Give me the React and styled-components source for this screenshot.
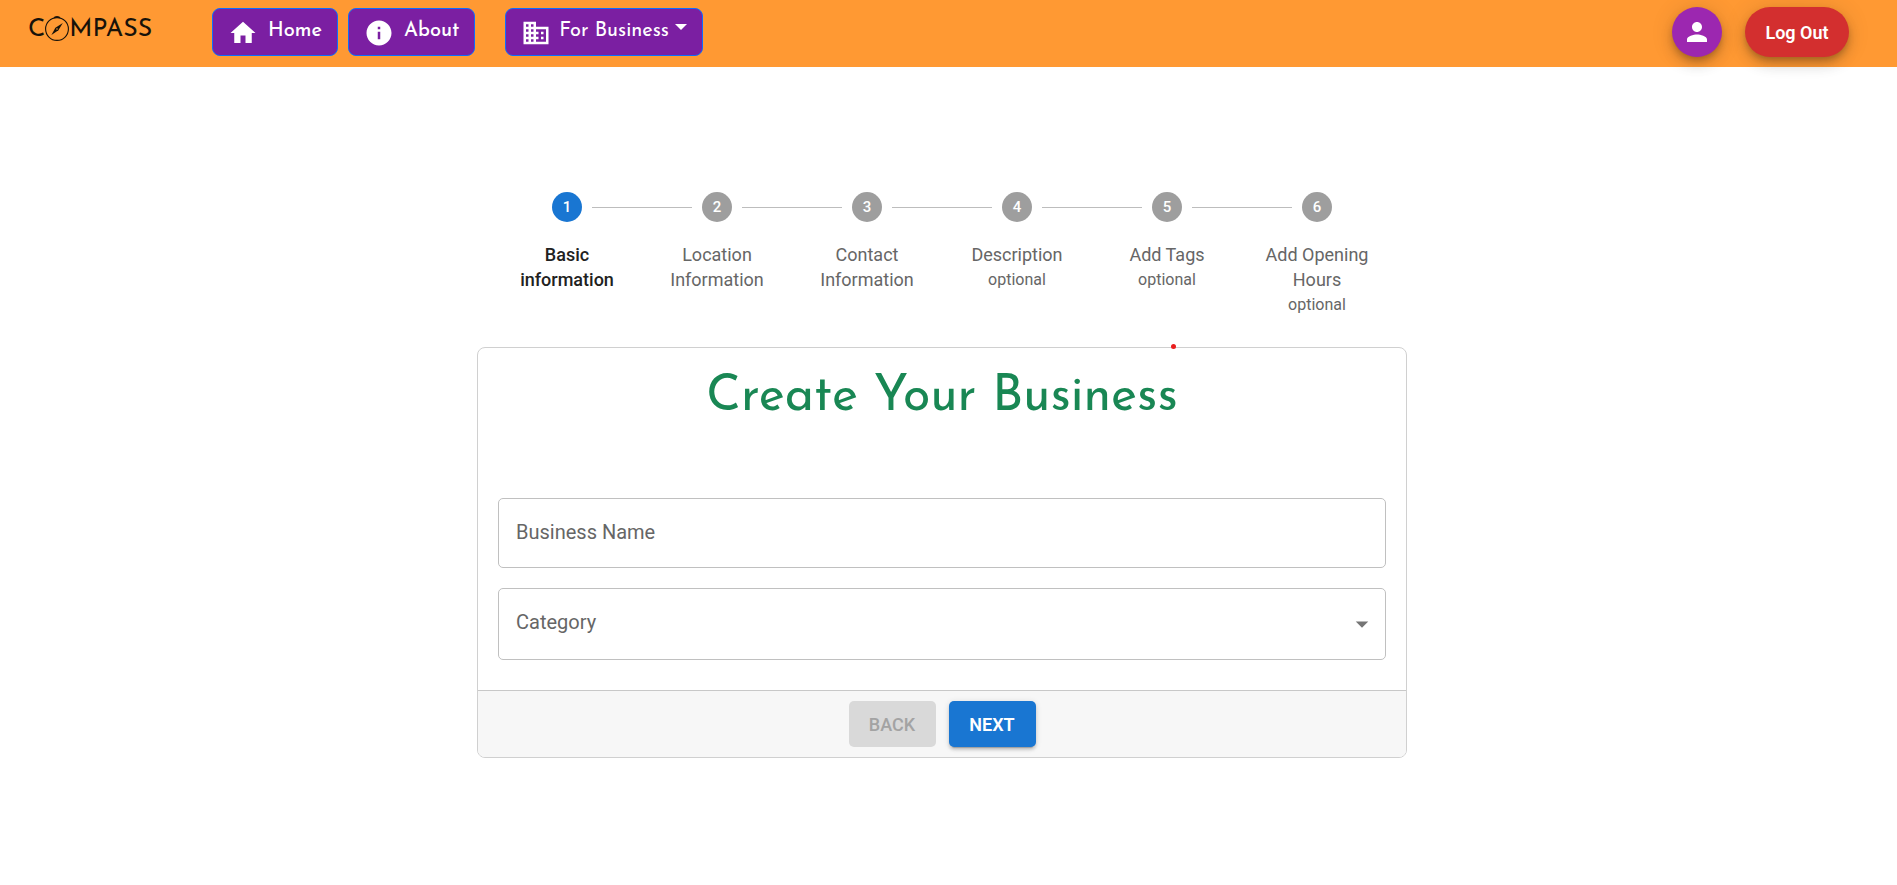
import React, { useState } from "react";
import styled, { createGlobalStyle, css } from "styled-components";
import { MdArrowDropDown, MdDomain, MdHome, MdInfo, MdPerson } from "react-icons/md";

const display = `"Josefin Sans", Lato, sans-serif`;

const GlobalStyle = createGlobalStyle`
  *, *::before, *::after { box-sizing: border-box; }
  body {
    margin: 0;
    background: #fff;
    color: #212121;
    font-family: Roboto, "Liberation Sans", sans-serif;
  }
  button, input, select { font-family: inherit; }
`;

const Header = styled.header`
  display: flex;
  align-items: flex-start;
  justify-content: space-between;
  height: 67px;
  padding: 7px 48px 0 28px;
  background: #ff9933;
`;

const Nav = styled.nav`
  display: flex;
  align-items: flex-start;
  padding-top: 1px;
`;

const Brand = styled.a`
  display: flex;
  align-items: center;
  width: 184px;
  color: #17120a;
  font: 400 25px/44px ${display};
  text-decoration: none;
`;

const NavButton = styled.button`
  display: flex;
  align-items: center;
  gap: ${(p) => (p.$menu ? 8 : 10)}px;
  height: 48px;
  margin-left: ${(p) => (p.$menu ? 30 : 0)}px;
  margin-right: ${(p) => (p.$spaced ? 10 : 0)}px;
  padding: 2px 15px 0;
  border: 1px solid #0d6efd;
  border-radius: 8px;
  background: #7b1fa2;
  color: #fff;
  font-weight: ${(p) => (p.$menu ? 400 : 500)};
  cursor: pointer;

  svg { flex: none; }
`;

const NavText = styled.span`
  padding-bottom: 4px;
  font-family: ${display};
  font-size: 20px;
  line-height: 24px;
`;

const Caret = styled.span`
  margin: 0 0 12px -2px;
  border: 6px solid transparent;
  border-top-color: #fff;
  border-bottom: 0;
`;

const Account = styled.div`
  display: flex;
  gap: 23px;
`;

const raised = css`
  box-shadow:
    0 4px 6px -1px rgba(0, 0, 0, 0.2),
    0 8px 13px 0 rgba(0, 0, 0, 0.14),
    0 1px 23px 0 rgba(0, 0, 0, 0.12);
`;

const Fab = styled.button`
  display: flex;
  align-items: center;
  justify-content: center;
  min-width: ${(p) => (p.$extended ? 104 : 50)}px;
  height: 50px;
  padding: 0;
  border: 0;
  border-radius: 25px;
  background: ${(p) => (p.$extended ? "#d32f2f" : "#9c27b0")};
  color: #fff;
  font-size: 18px;
  font-weight: 600;
  cursor: pointer;
  ${raised}
`;

const Main = styled.main`
  display: flex;
  flex-direction: column;
  align-items: center;
  gap: 30px;
  padding: 125px 13px 80px 0;
`;

const Stepper = styled.ol`
  display: flex;
  width: 100%;
  max-width: 900px;
  margin: 0;
  padding: 0;
  list-style: none;
`;

const Step = styled.li`
  flex: 1;
  text-align: center;
`;

const StepTrack = styled.div`
  display: flex;
  align-items: center;
  gap: 10px;
  margin-bottom: 20px;
`;

const Connector = styled.span`
  flex: 1;
  height: 0;
  border-top: 1px solid ${(p) => (p.$hidden ? "transparent" : "#bdbdbd")};
`;

const StepNumber = styled.span`
  width: 30px;
  height: 30px;
  border-radius: 50%;
  background: ${(p) => (p.$active ? "#1976d2" : "#9e9e9e")};
  color: #fff;
  font-size: 15px;
  font-weight: 500;
  line-height: 30px;
`;

const StepLabel = styled.div`
  padding: 0 20px;
  color: ${(p) => (p.$active ? "#212121" : "#666")};
  font-size: 18px;
  font-weight: ${(p) => (p.$active ? 500 : 400)};
  line-height: 25px;
`;

const Optional = styled.div`
  color: #666;
  font-size: 16px;
  line-height: 25px;
`;

const Card = styled.form`
  position: relative;
  width: 100%;
  max-width: 930px;
  border: 1px solid #d0d0d0;
  border-radius: 8px;
`;

const Marker = styled.span`
  position: absolute;
  top: -4px;
  left: calc(50% + 229px);
  width: 5px;
  height: 5px;
  border-radius: 50%;
  background: #e91e1e;
`;

const CardBody = styled.div`
  display: flex;
  flex-direction: column;
  gap: 20px;
  padding: 20px 20px 30px;
`;

const Title = styled.h1`
  margin: 0 0 50px;
  color: #198754;
  font: 400 50px/60px ${display};
  text-align: center;
`;

const Field = styled.div`
  position: relative;
  color: #757575;

  svg {
    position: absolute;
    top: 21px;
    right: 9px;
    pointer-events: none;
  }
`;

const FieldLabel = styled.label`
  position: absolute;
  top: 20px;
  left: 18px;
  color: #666;
  font-size: 20px;
  line-height: 28px;
  pointer-events: none;
`;

const control = css`
  display: block;
  width: 100%;
  padding: 0 18px;
  border: 1px solid #c0c0c0;
  border-radius: 5px;
  background: transparent;
  color: #212121;
  font-size: 20px;
`;

const TextInput = styled.input`
  ${control}
  height: 70px;
`;

const Select = styled.select`
  ${control}
  height: 72px;
  appearance: none;
`;

const CardFooter = styled.div`
  display: flex;
  justify-content: center;
  gap: 13px;
  padding: 10px;
  border-top: 1px solid #c8c8c8;
  border-radius: 0 0 7px 7px;
  background: #f7f7f7;
`;

const ActionButton = styled.button`
  min-width: 87px;
  height: 46px;
  padding: 0 16px;
  border: 0;
  border-radius: 5px;
  background: #1976d2;
  color: #fff;
  font-size: 18px;
  font-weight: 600;
  text-transform: uppercase;
  cursor: pointer;
  box-shadow:
    0 4px 1px -3px rgba(0, 0, 0, 0.2),
    0 3px 3px 0 rgba(0, 0, 0, 0.14),
    0 1px 6px 0 rgba(0, 0, 0, 0.12);

  &:disabled {
    background: #d9d9d9;
    color: #a3a3a3;
    font-weight: 500;
    box-shadow: none;
    cursor: default;
  }
`;

const steps = [
  { label: "Basic information" },
  { label: "Location Information" },
  { label: "Contact Information" },
  { label: "Description", optional: true },
  { label: "Add Tags", optional: true },
  { label: "Add Opening Hours", optional: true },
];

function CompassIcon() {
  return (
    <svg width="24" height="28" viewBox="0 0 24 28" aria-hidden="true">
      <circle cx="12" cy="13" r="11.4" fill="none" stroke="currentColor" strokeWidth="1.1" />
      <path d="M8.5 2.3Q9 0 12 0t3.5 2.3Q12 1 8.5 2.3z" fill="currentColor" />
      <path d="M17.8 6.9 13.4 14.3 6.4 19.1 10.4 11.7z" fill="currentColor" />
      <circle cx="12" cy="13" r=".8" fill="#ff9933" />
    </svg>
  );
}

export default function App() {
  const [name, setName] = useState("");
  const [category, setCategory] = useState("");

  return (
    <>
      <GlobalStyle />
      <Header>
        <Nav>
          <Brand href="#" aria-label="Compass">
            <span>C</span>
            <CompassIcon />
            <span>MPASS</span>
          </Brand>
          <NavButton type="button" $spaced>
            <MdHome size={30} />
            <NavText>Home</NavText>
          </NavButton>
          <NavButton type="button">
            <MdInfo size={30} />
            <NavText>About</NavText>
          </NavButton>
          <NavButton type="button" $menu aria-haspopup="menu">
            <MdDomain size={30} />
            <NavText>For Business</NavText>
            <Caret />
          </NavButton>
        </Nav>
        <Account>
          <Fab type="button" aria-label="Profile">
            <MdPerson size={30} />
          </Fab>
          <Fab type="button" $extended>Log Out</Fab>
        </Account>
      </Header>

      <Main>
        <Stepper>
          {steps.map((step, i) => (
            <Step key={step.label} aria-current={i === 0 ? "step" : undefined}>
              <StepTrack>
                <Connector $hidden={i === 0} />
                <StepNumber $active={i === 0}>{i + 1}</StepNumber>
                <Connector $hidden={i === steps.length - 1} />
              </StepTrack>
              <StepLabel $active={i === 0}>{step.label}</StepLabel>
              {step.optional && <Optional>optional</Optional>}
            </Step>
          ))}
        </Stepper>

        <Card onSubmit={(e) => e.preventDefault()}>
          <Marker />
          <CardBody>
            <Title>Create Your Business</Title>
            <Field>
              {!name && <FieldLabel htmlFor="business-name">Business Name</FieldLabel>}
              <TextInput
                id="business-name"
                aria-label="Business Name"
                value={name}
                onChange={(e) => setName(e.target.value)}
              />
            </Field>
            <Field>
              {!category && <FieldLabel htmlFor="category">Category</FieldLabel>}
              <Select
                id="category"
                aria-label="Category"
                value={category}
                onChange={(e) => setCategory(e.target.value)}
              >
                <option value="" />
              </Select>
              <MdArrowDropDown size={30} />
            </Field>
          </CardBody>
          <CardFooter>
            <ActionButton type="button" disabled>Back</ActionButton>
            <ActionButton type="submit">Next</ActionButton>
          </CardFooter>
        </Card>
      </Main>
    </>
  );
}
